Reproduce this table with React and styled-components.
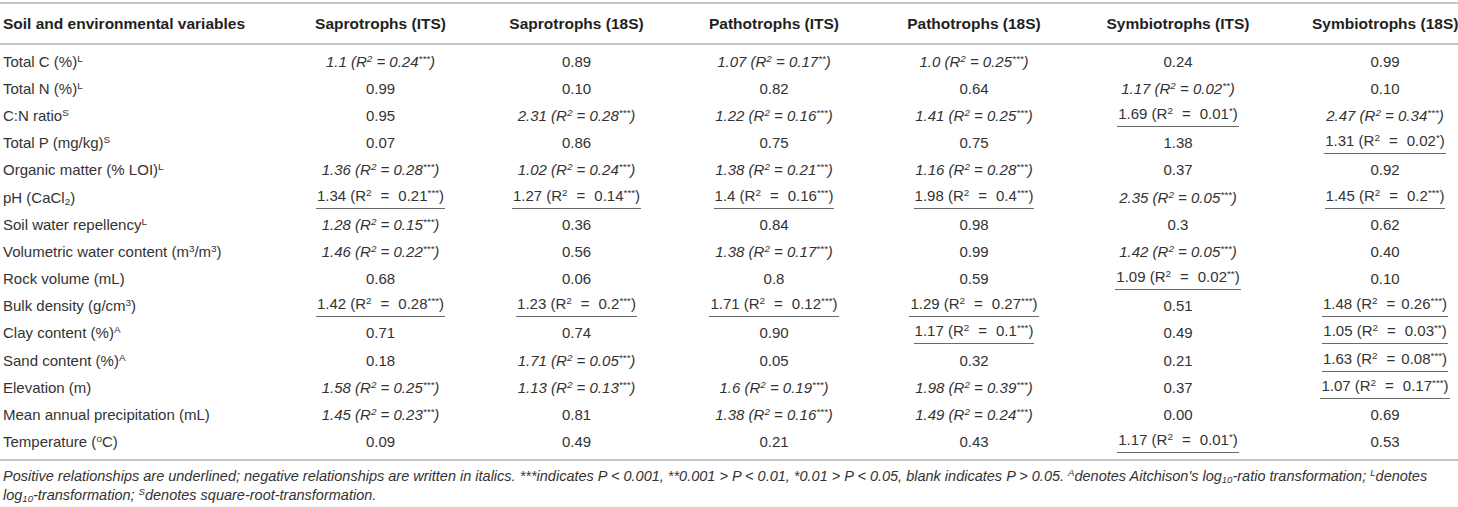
import React from "react";
import styled, { createGlobalStyle } from "styled-components";

const Global = createGlobalStyle`
  html, body { margin: 0; padding: 0; background: #ffffff; }
  body { font-family: "Liberation Sans", Arial, Helvetica, sans-serif; color: #333; }
`;

const Page = styled.div`
  width: 1458px;
  padding-top: 2px;
`;

const Table = styled.table`
  width: 1458px;
  table-layout: fixed;
  border-collapse: collapse;
  border-top: 2px solid #c4c4c4;
  border-bottom: 2px solid #c4c4c4;
`;

const Col = styled.col`
  width: ${(p) => p.$w}px;
`;

const HeadCell = styled.th`
  height: 39px;
  padding: 0 0 0 ${(p) => (p.$first ? 3 : p.$last ? 31 : 0)}px;
  border-bottom: 2px solid #c4c4c4;
  font-size: 15.5px;
  font-weight: bold;
  color: #1f1f1f;
  text-align: ${(p) => (p.$first ? "left" : "center")};
  vertical-align: middle;
  white-space: nowrap;
`;

const Row = styled.tr`
  height: 27.2px;
  &:first-child { height: 31.2px; }
  &:last-child { height: 31.2px; }
  &:first-child > td { padding-top: 4px; }
  &:last-child > td { padding-bottom: 4px; }
`;

const Cell = styled.td`
  padding: 0 0 0 ${(p) => (p.$first ? 3 : p.$last ? 31 : 0)}px;
  font-size: 15px;
  line-height: 18px;
  color: #333;
  text-align: ${(p) => (p.$first ? "left" : "center")};
  vertical-align: middle;
  white-space: nowrap;
`;

const Sup = styled.sup`
  font-size: 0.66em;
  line-height: 0;
  vertical-align: 0.5em;
`;

const Sub = styled.sub`
  font-size: 0.66em;
  line-height: 0;
  vertical-align: -0.2em;
`;

const Neg = styled.span`
  font-style: italic;
`;

const Pos = styled.span`
  display: inline-block;
  padding: 0 1px 3px;
  border-bottom: 1.5px solid #6a6a6a;
  line-height: 18px;
`;

const Eq = styled.span`
  margin: 0 ${(p) => (p.$tight ? "6px 0 9px" : "9px")};
`;

const Note = styled.p`
  margin: 0;
  padding: 6px 3px 0;
  font-size: 14.5px;
  line-height: 19.5px;
  font-style: italic;
  color: #333;
`;

const widths = [283, 195, 197, 198, 202, 206, 177];

const headers = [
  "Soil and environmental variables",
  "Saprotrophs (ITS)",
  "Saprotrophs (18S)",
  "Pathotrophs (ITS)",
  "Pathotrophs (18S)",
  "Symbiotrophs (ITS)",
  "Symbiotrophs (18S)",
];

const n = (v) => ({ t: "n", v });
const i = (v, r, s) => ({ t: "i", v, r, s });
const u = (v, r, s, tight) => ({ t: "u", v, r, s, tight });

const rows = [
  [<>Total C (%)<Sup>L</Sup></>, [i("1.1", "0.24", "***"), n("0.89"), i("1.07", "0.17", "**"), i("1.0", "0.25", "***"), n("0.24"), n("0.99")]],
  [<>Total N (%)<Sup>L</Sup></>, [n("0.99"), n("0.10"), n("0.82"), n("0.64"), i("1.17", "0.02", "**"), n("0.10")]],
  [<>C:N ratio<Sup>S</Sup></>, [n("0.95"), i("2.31", "0.28", "***"), i("1.22", "0.16", "***"), i("1.41", "0.25", "***"), u("1.69", "0.01", "*"), i("2.47", "0.34", "***")]],
  [<>Total P (mg/kg)<Sup>S</Sup></>, [n("0.07"), n("0.86"), n("0.75"), n("0.75"), n("1.38"), u("1.31", "0.02", "*")]],
  [<>Organic matter (% LOI)<Sup>L</Sup></>, [i("1.36", "0.28", "***"), i("1.02", "0.24", "***"), i("1.38", "0.21", "***"), i("1.16", "0.28", "***"), n("0.37"), n("0.92")]],
  [<>pH (CaCl<Sub>2</Sub>)</>, [u("1.34", "0.21", "***"), u("1.27", "0.14", "***"), u("1.4", "0.16", "***"), u("1.98", "0.4", "***"), i("2.35", "0.05", "***"), u("1.45", "0.2", "***")]],
  [<>Soil water repellency<Sup>L</Sup></>, [i("1.28", "0.15", "***"), n("0.36"), n("0.84"), n("0.98"), n("0.3"), n("0.62")]],
  [<>Volumetric water content (m<Sup>3</Sup>/m<Sup>3</Sup>)</>, [i("1.46", "0.22", "***"), n("0.56"), i("1.38", "0.17", "***"), n("0.99"), i("1.42", "0.05", "***"), n("0.40")]],
  [<>Rock volume (mL)</>, [n("0.68"), n("0.06"), n("0.8"), n("0.59"), u("1.09", "0.02", "**"), n("0.10")]],
  [<>Bulk density (g/cm<Sup>3</Sup>)</>, [u("1.42", "0.28", "***"), u("1.23", "0.2", "***"), u("1.71", "0.12", "***"), u("1.29", "0.27", "***"), n("0.51"), u("1.48", "0.26", "***", true)]],
  [<>Clay content (%)<Sup>A</Sup></>, [n("0.71"), n("0.74"), n("0.90"), u("1.17", "0.1", "***"), n("0.49"), u("1.05", "0.03", "**")]],
  [<>Sand content (%)<Sup>A</Sup></>, [n("0.18"), i("1.71", "0.05", "***"), n("0.05"), n("0.32"), n("0.21"), u("1.63", "0.08", "***", true)]],
  [<>Elevation (m)</>, [i("1.58", "0.25", "***"), i("1.13", "0.13", "***"), i("1.6", "0.19", "***"), i("1.98", "0.39", "***"), n("0.37"), u("1.07", "0.17", "***")]],
  [<>Mean annual precipitation (mL)</>, [i("1.45", "0.23", "***"), n("0.81"), i("1.38", "0.16", "***"), i("1.49", "0.24", "***"), n("0.00"), n("0.69")]],
  [<>Temperature (<Sup>o</Sup>C)</>, [n("0.09"), n("0.49"), n("0.21"), n("0.43"), u("1.17", "0.01", "*"), n("0.53")]],
];

function Value({ d }) {
  if (d.t === "i") {
    return (
      <Neg>
        {d.v} (R<Sup>2</Sup> = {d.r}
        <Sup>{d.s}</Sup>)
      </Neg>
    );
  }
  if (d.t === "u") {
    return (
      <Pos>
        {d.v} (R<Sup>2</Sup>
        <Eq $tight={d.tight}>=</Eq>
        {d.r}
        <Sup>{d.s}</Sup>)
      </Pos>
    );
  }
  return <>{d.v}</>;
}

export default function App() {
  return (
    <Page>
      <Global />
      <Table>
        <colgroup>
          {widths.map((w, k) => (
            <Col key={k} $w={w} />
          ))}
        </colgroup>
        <thead>
          <tr>
            {headers.map((h, k) => (
              <HeadCell key={k} $first={k === 0} $last={k === 6}>
                {h}
              </HeadCell>
            ))}
          </tr>
        </thead>
        <tbody>
          {rows.map(([label, vals], r) => (
            <Row key={r}>
              <Cell $first>{label}</Cell>
              {vals.map((d, k) => (
                <Cell key={k} $last={k === 5}>
                  <Value d={d} />
                </Cell>
              ))}
            </Row>
          ))}
        </tbody>
      </Table>
      <Note>
        Positive relationships are underlined; negative relationships are written in italics. ***indicates P &lt; 0.001, **0.001 &gt; P &lt; 0.01, *0.01 &gt; P &lt; 0.05, blank indicates P &gt; 0.05. <Sup>A</Sup>denotes Aitchison's log<Sub>10</Sub>-ratio transformation; <Sup>L</Sup>denotes
        <br />
        log<Sub>10</Sub>-transformation; <Sup>S</Sup>denotes square-root-transformation.
      </Note>
    </Page>
  );
}
